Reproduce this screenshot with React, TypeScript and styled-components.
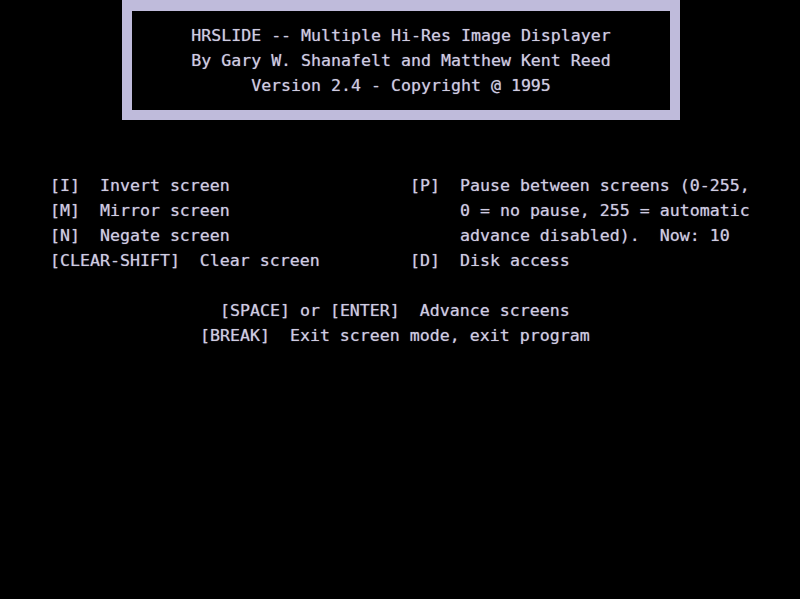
import styled, { createGlobalStyle } from 'styled-components';

const CELL = 10;

const GlobalStyle = createGlobalStyle`
  html, body {
    margin: 0;
    padding: 0;
    background: #000;
  }
`;

const optionsLeft = ['[I]  Invert screen', '[M]  Mirror screen', '[N]  Negate screen', '[CLEAR-SHIFT]  Clear screen'];

const optionsRight = [
  '[P]  Pause between screens (0-255,',
  '     0 = no pause, 255 = automatic',
  '     advance disabled).  Now: 10',
  '[D]  Disk access',
];

const App = () => {
  return (
    <S.Screen>
      <GlobalStyle />
      <S.TitleBox>
        <S.Line>HRSLIDE -- Multiple Hi-Res Image Displayer</S.Line>
        <S.Line>By Gary W. Shanafelt and Matthew Kent Reed</S.Line>
        <S.Line>Version 2.4 - Copyright @ 1995</S.Line>
      </S.TitleBox>
      <S.Options>
        <S.Column>
          {optionsLeft.map((text) => (
            <S.Line key={text}>{text}</S.Line>
          ))}
        </S.Column>
        <S.Column>
          {optionsRight.map((text) => (
            <S.Line key={text}>{text}</S.Line>
          ))}
        </S.Column>
      </S.Options>
      <S.Footer>
        <S.Line $indent={22}>[SPACE] or [ENTER]  Advance screens</S.Line>
        <S.Line $indent={20}>[BREAK]  Exit screen mode, exit program</S.Line>
      </S.Footer>
    </S.Screen>
  );
};

const S = {
  Screen: styled.div`
    width: 800px;
    height: 599px;
    overflow: hidden;
    background: #000;
    color: #cfcce2;
    font-family: 'DejaVu Sans Mono', 'Liberation Mono', monospace;
    font-size: 16.6px;
    line-height: 25px;
    text-shadow: 0 0 1px rgba(207, 204, 226, 0.6);
  `,

  TitleBox: styled.div`
    box-sizing: border-box;
    width: 558px;
    height: 120px;
    margin-left: 122px;
    padding-top: 12px;
    border: 10px solid #bfbbdb;
    border-top-width: 11px;
    text-align: center;
  `,

  Line: styled.div<{ $indent?: number }>`
    height: 25px;
    white-space: pre;
    padding-left: ${({ $indent = 0 }) => $indent * CELL}px;
  `,

  Options: styled.div`
    display: grid;
    grid-template-columns: ${36 * CELL}px 1fr;
    margin-top: 53px;
    padding-left: ${5 * CELL}px;
  `,

  Column: styled.div`
    display: flex;
    flex-direction: column;
  `,

  Footer: styled.div`
    display: flex;
    flex-direction: column;
    margin-top: 25px;
  `,
};

export default App;
